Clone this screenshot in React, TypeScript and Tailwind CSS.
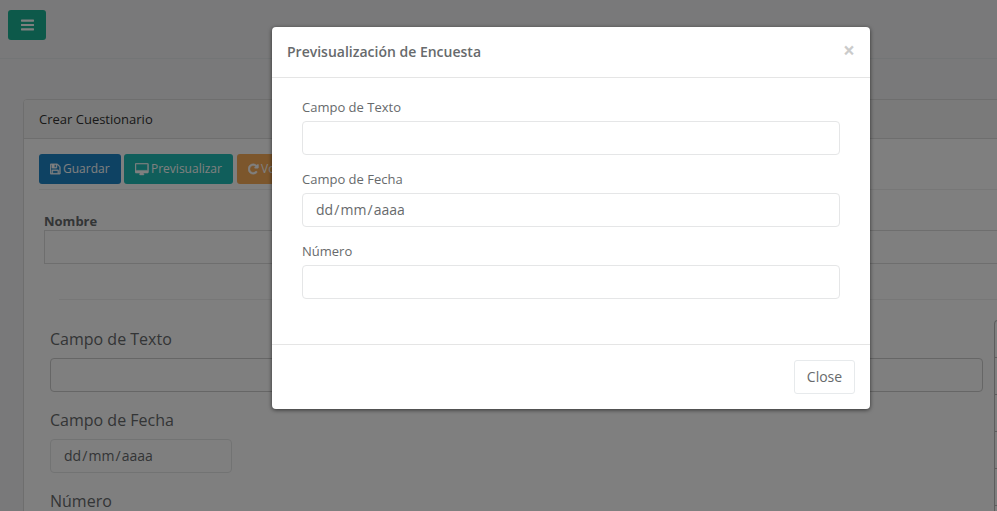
import type { ReactNode } from "react";

function Icon({ d, viewBox, className }: { d: string; viewBox: string; className: string }) {
  return (
    <svg viewBox={viewBox} className={className} fill="currentColor" aria-hidden="true">
      <path d={d} />
    </svg>
  );
}

const BARS =
  "M1664 1344v128q0 26-19 45t-45 19h-1408q-26 0-45-19t-19-45v-128q0-26 19-45t45-19h1408q26 0 45 19t19 45zm0-512v128q0 26-19 45t-45 19h-1408q-26 0-45-19t-19-45v-128q0-26 19-45t45-19h1408q26 0 45 19t19 45zm0-512v128q0 26-19 45t-45 19h-1408q-26 0-45-19t-19-45v-128q0-26 19-45t45-19h1408q26 0 45 19t19 45z";
const FLOPPY =
  "M512 1536h768v-384h-768v384zm896 0h128v-896q0-14-10-38.5t-20-34.5l-281-281q-10-10-34-20t-39-10v416q0 40-28 68t-68 28h-576q-40 0-68-28t-28-68v-416h-128v1280h128v-416q0-40 28-68t68-28h832q40 0 68 28t28 68v416zm-384-928v-320q0-13-9.5-22.5t-22.5-9.5h-192q-13 0-22.5 9.5t-9.5 22.5v320q0 13 9.5 22.5t22.5 9.5h192q13 0 22.5-9.5t9.5-22.5zm640 32v928q0 40-28 68t-68 28h-1344q-40 0-68-28t-28-68v-1344q0-40 28-68t68-28h928q40 0 88 20t76 48l280 280q28 28 48 76t20 88z";
const DESKTOP =
  "M1728 992v-832q0-13-9.5-22.5t-22.5-9.5h-1600q-13 0-22.5 9.5t-9.5 22.5v832q0 13 9.5 22.5t22.5 9.5h1600q13 0 22.5-9.5t9.5-22.5zm128-832v1088q0 66-47 113t-113 47h-544q0 37 16 77.5t32 71 16 43.5q0 26-19 45t-45 19h-512q-26 0-45-19t-19-45q0-14 16-44t32-70 16-78h-544q-66 0-113-47t-47-113v-1088q0-66 47-113t113-47h1600q66 0 113 47t47 113z";
const REPEAT =
  "M1664 256v448q0 26-19 45t-45 19h-448q-42 0-59-40-17-39 14-69l138-138q-148-137-349-137-104 0-198.5 40.5t-163.5 109.5-109.5 163.5-40.5 198.5 40.5 198.5 109.5 163.5 163.5 109.5 198.5 40.5q119 0 225-52t179-147q7-10 23-12 15 0 25 9l137 138q9 8 9.5 20.5t-7.5 22.5q-109 132-264 204.5t-327 72.5q-156 0-298-61t-245-164-164-245-61-298 61-298 164-245 245-164 298-61q147 0 284.5 55.5t244.5 156.5l130-129q29-31 70-14 39 17 39 59z";

function DateHint() {
  return (
    <>
      dd<span className="mx-[1.1px]">/</span>mm<span className="mx-[1.1px]">/</span>aaaa
    </>
  );
}

function Field({ label, children }: { label: string; children?: ReactNode }) {
  return (
    <div className="mb-[15px]">
      <div className="mb-[5px] h-[18px] text-[13px] leading-[18px]">{label}</div>
      <div className="h-[34px] rounded-[4px] border border-[#e5e6e7] px-[13px] text-[14px] leading-[32px]">
        {children}
      </div>
    </div>
  );
}

function ToolButton({ className, children }: { className: string; children: ReactNode }) {
  return (
    <button
      className={`flex h-[30px] shrink-0 items-center rounded-[3px] text-[12px] leading-[18px] text-white ${className}`}
    >
      {children}
    </button>
  );
}

function Page() {
  return (
    <div className="flex h-full flex-col bg-[#f3f3f4]">
      <header className="h-[59px] shrink-0 border-b border-[#e7eaec] pt-[10px] pl-2">
        <button className="flex h-[30px] w-[38px] items-center justify-center rounded-[3px] bg-[#1ab394] text-white">
          <Icon d={BARS} viewBox="128 0 1536 1792" className="h-[16px] w-[13px]" />
        </button>
      </header>
      <section className="mt-10 ml-[23px] h-[600px] w-[1100px] shrink-0 rounded-t-[4px] border border-[#ddd] bg-white">
        <h1 className="h-[39px] rounded-t-[3px] border-b border-[#ddd] bg-[#f5f5f5] pl-[15px] text-[13px] leading-[38px] text-[#333]">
          Crear Cuestionario
        </h1>
        <div className="pt-[15px] pl-[15px]">
          <div className="flex">
            <ToolButton className="mr-[3px] w-[82px] bg-[#1c84c6] pl-[11px]">
              <Icon
                d={FLOPPY}
                viewBox="128 0 1536 1792"
                className="mr-[2.5px] h-[12px] w-[10.5px] stroke-current stroke-[60]"
              />
              Guardar
            </ToolButton>
            <ToolButton className="mr-1 w-[109px] bg-[#21bdb6] pl-[11px]">
              <Icon
                d={DESKTOP}
                viewBox="-64 0 1920 1792"
                className="mr-[2.5px] h-[13px] w-[13.5px] stroke-current stroke-[70]"
              />
              Previsualizar
            </ToolButton>
            <ToolButton className="w-[72px] bg-[#f8ac59] pl-[11px]">
              <Icon
                d={REPEAT}
                viewBox="128 0 1536 1792"
                className="mr-[2.5px] h-[12px] w-[10.5px] stroke-current stroke-[80]"
              />
              Volver
            </ToolButton>
          </div>
          <div className="mt-[5px] border-t border-[#eee]" />
          <div className="pt-[22px] pl-[5px]">
            <div className="h-[18px] text-[13px] leading-[18px] font-bold">Nombre</div>
            <div className="h-[34px] border border-[#ddd]" />
          </div>
          <div className="mt-[35px] ml-5 border-t border-[#eee]" />
          <div className="flex pt-5 pl-[11px]">
            <div className="mr-[11px] w-[933px] text-[16px]">
              <div className="mt-[7px] h-[24px] leading-[24px]">Campo de Texto</div>
              <div className="mt-[7px] h-[34px] rounded-[4px] border border-[#ccc]" />
              <div className="mt-4 h-[24px] leading-[24px]">Campo de Fecha</div>
              <div className="mt-[7px] h-[34px] w-[182px] rounded-[4px] border border-[#e5e6e7] px-[13px] text-[14px] leading-[32px]">
                <DateHint />
              </div>
              <div className="mt-4 h-[24px] leading-[24px]">Número</div>
            </div>
            <div className="w-[100px] rounded-t-[4px] border border-b-0 border-[#bbb]">
              {[0, 1, 2, 3, 4, 5].map((row) => (
                <div key={row} className="h-[37px] border-b border-[#bbb]" />
              ))}
            </div>
          </div>
        </div>
      </section>
    </div>
  );
}

export default function App() {
  return (
    <div className="relative h-screen w-screen overflow-hidden font-['Open_Sans','Noto_Sans',sans-serif] text-[#676a6c]">
      <Page />
      <div className="absolute inset-0 flex items-start bg-black/50 pt-[27px] pl-[272px]">
        <div className="w-[598px] shrink-0 rounded-[4px] bg-white shadow-[0_1px_4px_rgba(0,0,0,0.6)]">
          <div className="flex h-[51px] items-center justify-between border-b border-[#e5e5e5] px-[15px]">
            <h2 className="-mt-px text-[14px] font-semibold">Previsualización de Encuesta</h2>
            <button className="mt-[-4px] text-[21px] leading-[21px] font-bold text-black opacity-20">×</button>
          </div>
          <div className="h-[266px] px-[30px] pt-5">
            <Field label="Campo de Texto" />
            <Field label="Campo de Fecha">
              <DateHint />
            </Field>
            <Field label="Número" />
          </div>
          <div className="flex h-[65px] justify-end border-t border-[#e5e5e5] p-[15px]">
            <button className="h-[34px] w-[61px] rounded-[3px] border border-[#e7eaec] text-[14px] leading-[32px]">
              Close
            </button>
          </div>
        </div>
      </div>
    </div>
  );
}
